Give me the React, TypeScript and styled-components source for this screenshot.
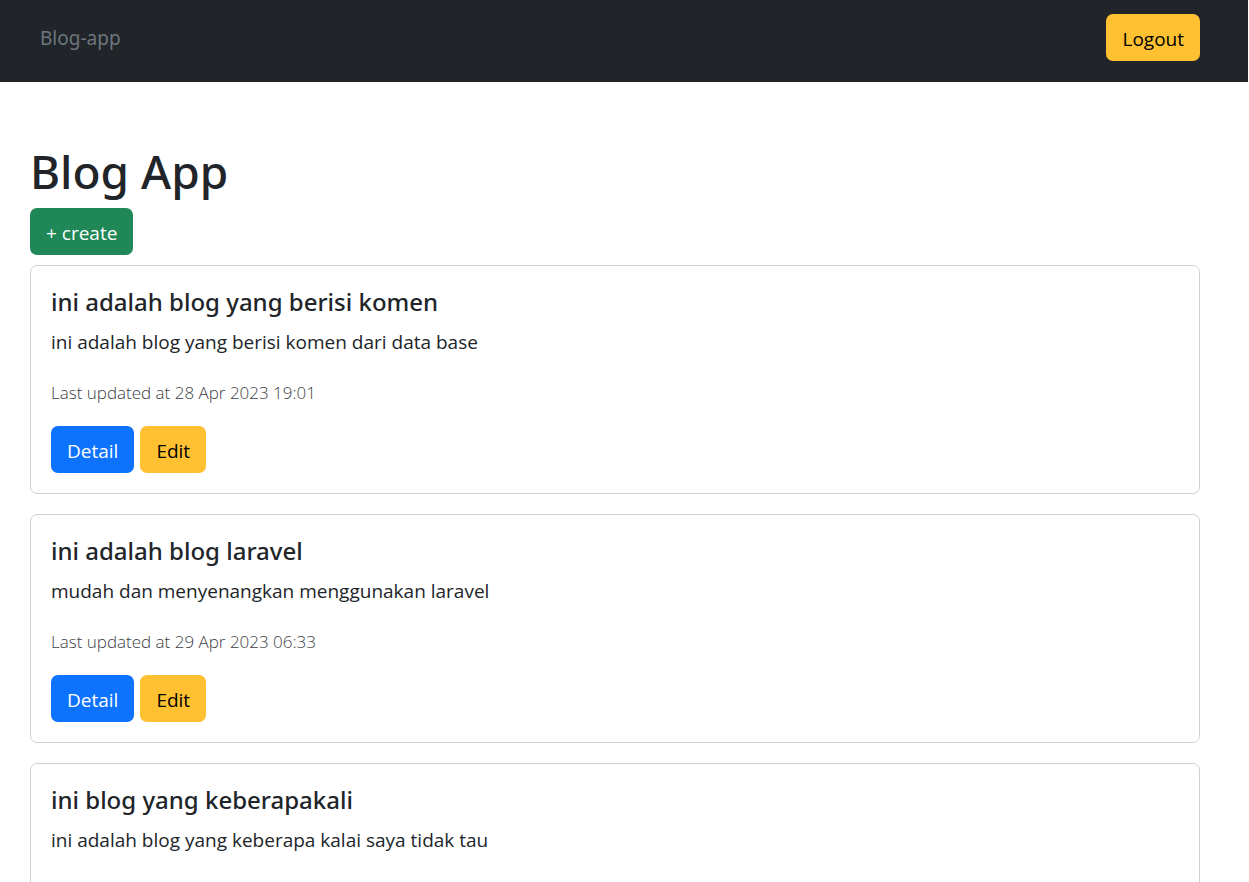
import React from 'react';
import styled, { createGlobalStyle } from 'styled-components';

const GlobalStyle = createGlobalStyle`
  *, *::before, *::after { box-sizing: border-box; }
  html { background: #fff; }
  body {
    margin: 0;
    border-right: 1px solid #fcfcfc;
    color: #212529;
    background: #fff;
    font-family: 'Open Sans', 'Noto Sans', sans-serif;
    font-size: 19px;
    line-height: 32px;
  }
  h1, h2 {
    font-family: 'Noto Sans', 'Open Sans', sans-serif;
    font-weight: 500;
  }
`;

const Page = styled.div`
  height: 100vh;
  overflow: hidden;
`;

const Navbar = styled.nav`
  display: flex;
  align-items: flex-start;
  justify-content: space-between;
  padding: 14px 48px 21px 40px;
  background: #212529;
`;

const Brand = styled.a`
  padding-top: 8px;
  color: #6c757d;
  font-family: 'Noto Sans', 'Open Sans', sans-serif;
  text-decoration: none;
`;

const tones = {
  primary: { background: '#0d72fd', color: '#fff' },
  success: { background: '#208756', color: '#fff' },
  warning: { background: '#ffc032', color: '#000' },
};

const Button = styled.button<{ $tone: keyof typeof tones }>`
  padding: 9px 16px 6px;
  border: 0;
  border-radius: 7px;
  font: inherit;
  cursor: pointer;
  color: ${({ $tone }) => tones[$tone].color};
  background: ${({ $tone }) => tones[$tone].background};
`;

const Main = styled.main`
  padding: 59px 48px 0 30px;
`;

const PageTitle = styled.h1`
  margin: 0 0 7px;
  font-size: 46px;
  line-height: 60px;
`;

const PostList = styled.div`
  display: flex;
  flex-direction: column;
  gap: 20px;
  margin-top: 10px;
`;

const Card = styled.article`
  min-height: 229px;
  padding: 20px;
  border: 1px solid #d0d1d2;
  border-radius: 7px;
`;

const CardTitle = styled.h2`
  margin: 0 0 8px;
  font-size: 24px;
  line-height: 32px;
`;

const CardText = styled.p`
  margin: 0 0 19px;
`;

const Updated = styled.small`
  display: block;
  margin-bottom: 17px;
  color: #3c4044;
  font-size: 17px;
  font-weight: 300;
`;

const Actions = styled.div`
  display: flex;
  gap: 6px;
`;

const posts = [
  {
    title: 'ini adalah blog yang berisi komen',
    text: 'ini adalah blog yang berisi komen dari data base',
    updated: '28 Apr 2023 19:01',
  },
  {
    title: 'ini adalah blog laravel',
    text: 'mudah dan menyenangkan menggunakan laravel',
    updated: '29 Apr 2023 06:33',
  },
  {
    title: 'ini blog yang keberapakali',
    text: 'ini adalah blog yang keberapa kalai saya tidak tau',
  },
];

export default function App() {
  return (
    <Page>
      <GlobalStyle />
      <Navbar>
        <Brand href="#">Blog-app</Brand>
        <Button type="button" $tone="warning">Logout</Button>
      </Navbar>
      <Main>
        <PageTitle>Blog App</PageTitle>
        <Button type="button" $tone="success">+ create</Button>
        <PostList>
          {posts.map((post) => (
            <Card key={post.title}>
              <CardTitle>{post.title}</CardTitle>
              <CardText>{post.text}</CardText>
              {post.updated && (
                <>
                  <Updated>Last updated at {post.updated}</Updated>
                  <Actions>
                    <Button type="button" $tone="primary">Detail</Button>
                    <Button type="button" $tone="warning">Edit</Button>
                  </Actions>
                </>
              )}
            </Card>
          ))}
        </PostList>
      </Main>
    </Page>
  );
}
